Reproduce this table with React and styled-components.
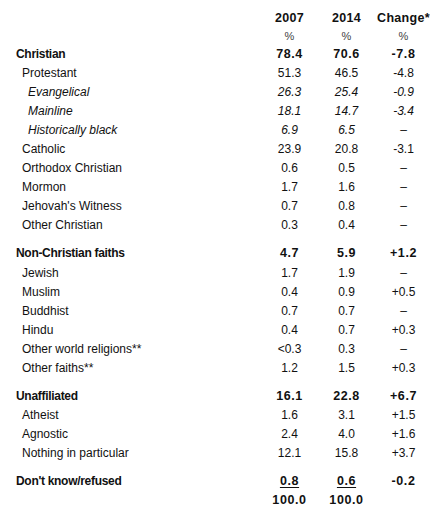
import React from 'react';
import styled, { createGlobalStyle } from 'styled-components';

const GlobalStyle = createGlobalStyle`
    body {
        margin: 0;
        background: #ffffff;
        font-family: "Liberation Sans", Arial, sans-serif;
        color: #111111;
    }
`;

const Page = styled.div`
    width: 441px;
    padding-top: 8px;
`;

const Row = styled.div`
    display: grid;
    grid-template-columns: 261px 57px 57px 57px;
    align-items: center;
    height: ${props => props.$tall || 19}px;
    margin-top: ${props => props.$gap || 0}px;
`;

const Label = styled.div`
    padding-left: ${props => props.$level === 0 ? 16 : props.$level === 1 ? 22 : 28}px;
    font-size: 12px;
    font-weight: ${props => props.$level === 0 ? 700 : 400};
    font-style: ${props => props.$level === 2 ? 'italic' : 'normal'};
    letter-spacing: ${props => props.$level === 0 ? '-0.3px' : '0'};
    white-space: nowrap;
`;

const Num = styled.div`
    text-align: center;
    font-size: ${props => props.$bold ? 12.5 : 12}px;
    font-weight: ${props => props.$bold ? 700 : 400};
    font-style: ${props => props.$italic ? 'italic' : 'normal'};
    letter-spacing: ${props => props.$bold ? '0.6px' : '0'};
    text-decoration: ${props => props.$underline ? 'underline' : 'none'};
    text-underline-offset: 2px;
`;

const HeadCell = styled.div`
    text-align: center;
    font-size: 12.5px;
    font-weight: 700;
    letter-spacing: 0.3px;
`;

const PctCell = styled.div`
    text-align: center;
    font-size: 11px;
    color: #444444;
`;

const rows = [
    { label: 'Christian', level: 0, v: ['78.4', '70.6', '-7.8'] },
    { label: 'Protestant', level: 1, v: ['51.3', '46.5', '-4.8'] },
    { label: 'Evangelical', level: 2, v: ['26.3', '25.4', '-0.9'] },
    { label: 'Mainline', level: 2, v: ['18.1', '14.7', '-3.4'] },
    { label: 'Historically black', level: 2, v: ['6.9', '6.5', '–'] },
    { label: 'Catholic', level: 1, v: ['23.9', '20.8', '-3.1'] },
    { label: 'Orthodox Christian', level: 1, v: ['0.6', '0.5', '–'] },
    { label: 'Mormon', level: 1, v: ['1.7', '1.6', '–'] },
    { label: "Jehovah's Witness", level: 1, v: ['0.7', '0.8', '–'] },
    { label: 'Other Christian', level: 1, v: ['0.3', '0.4', '–'] },
    { label: 'Non-Christian faiths', level: 0, gap: 9, v: ['4.7', '5.9', '+1.2'] },
    { label: 'Jewish', level: 1, v: ['1.7', '1.9', '–'] },
    { label: 'Muslim', level: 1, v: ['0.4', '0.9', '+0.5'] },
    { label: 'Buddhist', level: 1, v: ['0.7', '0.7', '–'] },
    { label: 'Hindu', level: 1, v: ['0.4', '0.7', '+0.3'] },
    { label: 'Other world religions**', level: 1, v: ['<0.3', '0.3', '–'] },
    { label: 'Other faiths**', level: 1, v: ['1.2', '1.5', '+0.3'] },
    { label: 'Unaffiliated', level: 0, gap: 9, v: ['16.1', '22.8', '+6.7'] },
    { label: 'Atheist', level: 1, v: ['1.6', '3.1', '+1.5'] },
    { label: 'Agnostic', level: 1, v: ['2.4', '4.0', '+1.6'] },
    { label: 'Nothing in particular', level: 1, v: ['12.1', '15.8', '+3.7'] },
    { label: "Don't know/refused", level: 0, gap: 8, underline: true, v: ['0.8', '0.6', '-0.2'] },
];

const App = () => {
    return (
        <Page>
            <GlobalStyle />
            <Row $tall={19}>
                <div />
                <HeadCell>2007</HeadCell>
                <HeadCell>2014</HeadCell>
                <HeadCell>Change*</HeadCell>
            </Row>
            <Row $tall={17}>
                <div />
                <PctCell>%</PctCell>
                <PctCell>%</PctCell>
                <PctCell>%</PctCell>
            </Row>
            {rows.map(r => (
                <Row key={r.label} $gap={r.gap} $tall={19.1}>
                    <Label $level={r.level}>{r.label}</Label>
                    {r.v.map((val, i) => (
                        <Num
                            key={i}
                            $bold={r.level === 0}
                            $italic={r.level === 2 && val !== '–'}
                            $underline={r.underline && i < 2}
                        >
                            {val}
                        </Num>
                    ))}
                </Row>
            ))}
            <Row>
                <div />
                <Num $bold>100.0</Num>
                <Num $bold>100.0</Num>
                <div />
            </Row>
        </Page>
    );
};

export default App;
